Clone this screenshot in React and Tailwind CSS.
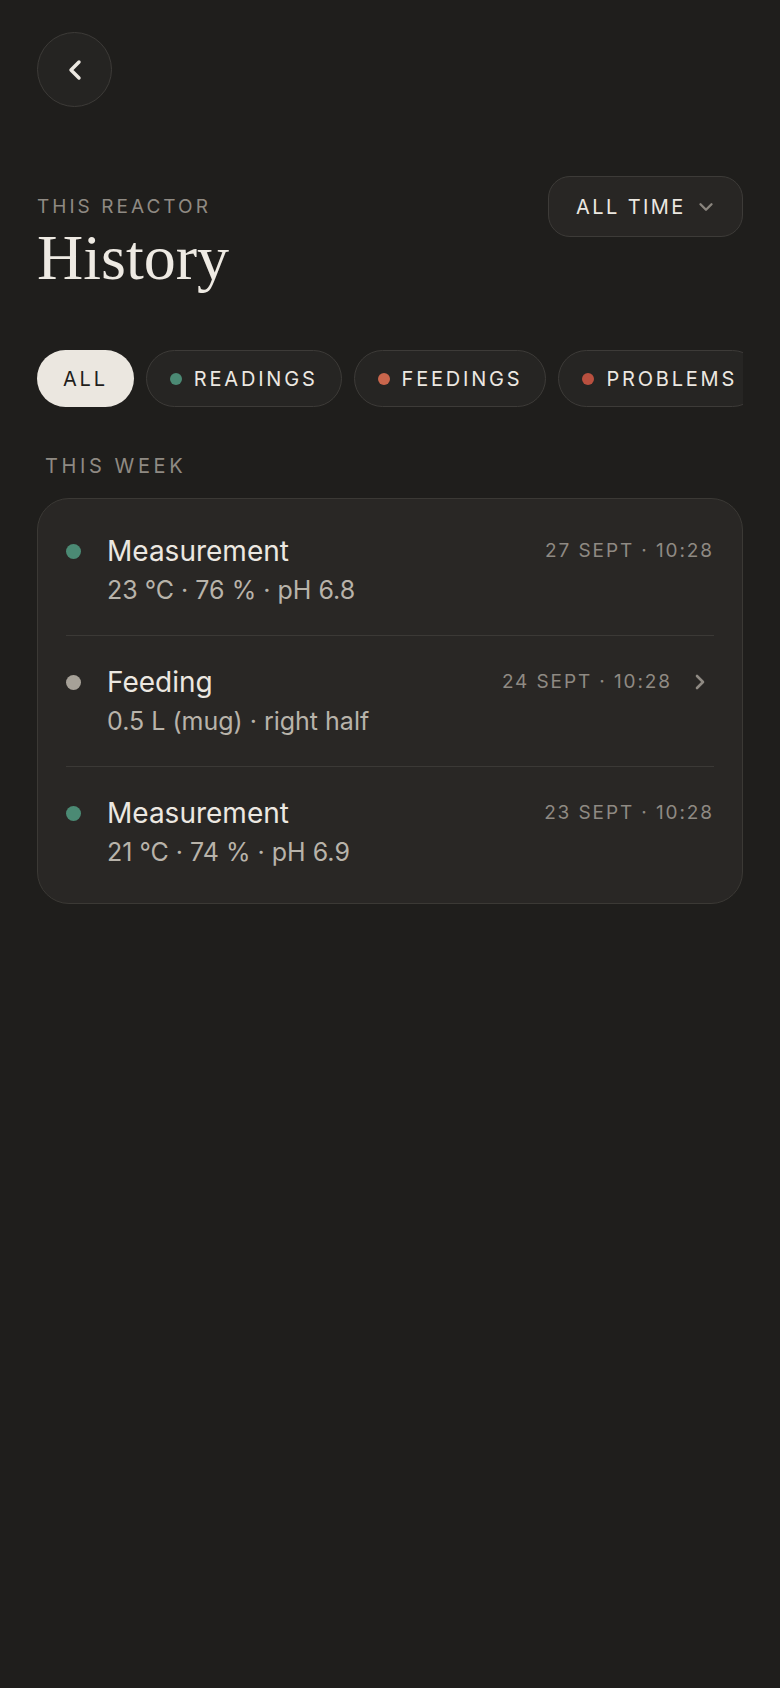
import { ChevronLeft, ChevronDown, ChevronRight } from "lucide-react";

const filters = [
  { label: "ALL", active: true },
  { label: "READINGS", dot: "bg-[#4b8a74]" },
  { label: "FEEDINGS", dot: "bg-[#c9664c]" },
  { label: "PROBLEMS", dot: "bg-[#b9503f]" },
];

const entries = [
  { title: "Measurement", detail: "23 °C · 76 % · pH 6.8", date: "27 SEPT · 10:28", dot: "bg-[#4b8a74]" },
  { title: "Feeding", detail: "0.5 L (mug) · right half", date: "24 SEPT · 10:28", dot: "bg-[#a6a198]", link: true },
  { title: "Measurement", detail: "21 °C · 74 % · pH 6.9", date: "23 SEPT · 10:28", dot: "bg-[#4b8a74]" },
];

export default function App() {
  return (
    <div className="min-h-screen bg-[#1f1e1c] px-[37px] pt-[32px] font-['Inter',sans-serif] text-[#ece8e1]">
      {/* back */}
      <button className="w-[75px] h-[75px] rounded-full border border-[#3d3b38] bg-[#252422] flex items-center justify-center text-[#ece8e1]">
        <ChevronLeft size={32} strokeWidth={2.6} />
      </button>

      {/* header */}
      <div className="mt-[69px] flex justify-between items-start">
        <div className="pt-[19px]">
          <div className="text-[19px] leading-[24px] tracking-[0.16em] text-[#8f8a83]">THIS REACTOR</div>
          <h1 className="mt-[9px] font-['Liberation_Serif',serif] text-[64px] leading-[60px] text-[#eeeae3]">History</h1>
        </div>
        <button className="h-[61px] w-[195px] rounded-[22px] border border-[#3d3b38] bg-[#282624] flex items-center justify-between pl-[27px] pr-[25px]">
          <span className="text-[20px] tracking-[0.12em] text-[#ece8e1]">ALL TIME</span>
          <ChevronDown size={22} strokeWidth={2.6} className="text-[#8a857e]" />
        </button>
      </div>

      {/* filters */}
      <div className="mt-[62px] flex gap-[12px] overflow-hidden">
        {filters.map((f) =>
          f.active ? (
            <div key={f.label} className="h-[57px] shrink-0 rounded-full bg-[#ebe7e0] px-[26px] flex items-center text-[20px] tracking-[0.14em] text-[#1f1e1c]">
              {f.label}
            </div>
          ) : (
            <div key={f.label} className="h-[57px] shrink-0 rounded-full border border-[#3d3b38] bg-[#262523] px-[23px] flex items-center gap-[12px] text-[20px] tracking-[0.14em] text-[#ece8e1]">
              <span className={`w-[12px] h-[12px] rounded-full ${f.dot}`} />
              {f.label}
            </div>
          )
        )}
      </div>

      {/* section */}
      <div className="mt-[47px] ml-[8px] text-[20px] leading-[24px] tracking-[0.18em] text-[#8f8a83]">THIS WEEK</div>

      <div className="mt-[20px] rounded-[32px] border border-[#3b3935] bg-[#292725] px-[28px] py-[6px] divide-y divide-[#3b3936]">
        {entries.map((e, i) => (
          <div key={i} className="flex py-[29px]">
            <div className="h-[34px] flex items-center">
              <span className={`w-[15px] h-[15px] rounded-full ${e.dot}`} />
            </div>
            <div className="ml-[26px] flex-1">
              <div className="flex items-center justify-between h-[34px]">
                <span className="text-[28px] leading-[34px] text-[#ece8e1]">{e.title}</span>
                <div className="flex items-center gap-[16px]">
                  <span className="text-[19px] tracking-[0.1em] text-[#8f8a83]">{e.date}</span>
                  {e.link && <ChevronRight size={24} strokeWidth={2.6} className="text-[#8f8a83] mr-[2px]" />}
                </div>
              </div>
              <div className="mt-[6px] text-[25px] leading-[32px] text-[#b8b3aa]">{e.detail}</div>
            </div>
          </div>
        ))}
      </div>
    </div>
  );
}
